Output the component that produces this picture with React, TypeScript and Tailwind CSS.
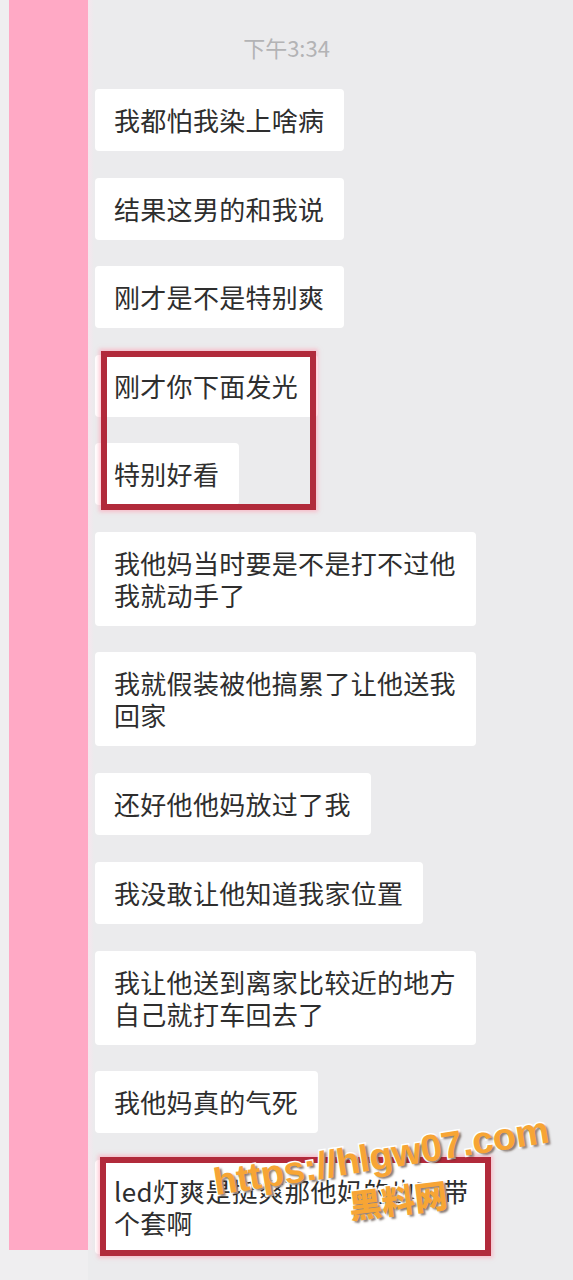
import React from 'react'

type Msg = { lines: string[] }

const font = '[font-family:"Noto_Sans_CJK_SC","Liberation_Sans",sans-serif]'

function Bubble({ lines }: Msg) {
  return (
    <div className={`bg-white rounded-[4px] pl-[19px] pr-[20px] py-[15px] text-[26px] leading-[32px] tracking-[0.3px] text-[#2e2e2e] whitespace-nowrap ${font}`}>
      {lines.map((l, i) => (
        <div key={i}>{l}</div>
      ))}
    </div>
  )
}

function Marked({ children, box }: { children: React.ReactNode; box: string }) {
  return (
    <div className="relative flex flex-col items-start gap-[26px]">
      {children}
      <div className={`absolute border-[6px] border-[#b12a3b] shadow-[0_0_4px_2px_rgba(255,160,180,0.6)] pointer-events-none ${box}`} />
    </div>
  )
}

export default function App() {
  return (
    <div className="relative flex min-h-[1280px] w-[573px] bg-[#ebebed] overflow-hidden">
      {/* left pink strip */}
      <div className="flex w-[88px] shrink-0 bg-[#efeef0] pl-[9px]">
        <div className="h-[1250px] w-[79px] bg-[#ffa9c5]" />
      </div>
      <div className="w-[6px] h-[1250px] bg-gradient-to-r from-[#f6e6ee] to-[#ebebed]" />

      <div className="flex flex-1 flex-col items-start pl-[1px]">
        <div className={`w-full pt-[32px] pr-[95px] text-center text-[22px] leading-[30px] text-[#b3b3b5] ${font}`}>
          下午3:34
        </div>

        <div className="mt-[27px] flex flex-col items-start gap-[26.7px]">
          <Bubble lines={['我都怕我染上啥病']} />
          <Bubble lines={['结果这男的和我说']} />
          <Bubble lines={['刚才是不是特别爽']} />
          <Marked box="left-[6px] top-[-4px] w-[215px] bottom-[-5px]">
            <Bubble lines={['刚才你下面发光']} />
            <Bubble lines={['特别好看']} />
          </Marked>
          <Bubble lines={['我他妈当时要是不是打不过他', '我就动手了']} />
          <Bubble lines={['我就假装被他搞累了让他送我', '回家']} />
          <Bubble lines={['还好他他妈放过了我']} />
          <Bubble lines={['我没敢让他知道我家位置']} />
          <Bubble lines={['我让他送到离家比较近的地方', '自己就打车回去了']} />
          <Bubble lines={['我他妈真的气死']} />
          <Marked box="left-[5px] top-[-3px] w-[391px] bottom-[-2px]">
            <Bubble lines={['led灯爽是挺爽那他妈的也不带', '个套啊']} />
          </Marked>
        </div>
      </div>

      {/* watermark */}
      <div className="absolute left-[381px] top-[1156px] -translate-x-1/2 -translate-y-1/2 rotate-[-9deg] whitespace-nowrap text-[38px] leading-[42px] font-bold tracking-[-0.3px] text-[#f7a535] [font-family:'Liberation_Sans',Arial,sans-serif] [-webkit-text-stroke:3px_white] [paint-order:stroke_fill] [text-shadow:2px_2px_2px_rgba(60,40,30,0.6)] pointer-events-none">
        https://hlgw07.com
      </div>
      <div className="absolute left-[398px] top-[1199px] -translate-x-1/2 -translate-y-1/2 rotate-[-7deg] whitespace-nowrap text-[33px] leading-[38px] font-black text-[#f7a535] [font-family:'Noto_Sans_CJK_SC',sans-serif] [-webkit-text-stroke:3px_white] [paint-order:stroke_fill] [text-shadow:2px_2px_2px_rgba(60,40,30,0.6)] pointer-events-none">
        黑料网
      </div>
    </div>
  )
}
